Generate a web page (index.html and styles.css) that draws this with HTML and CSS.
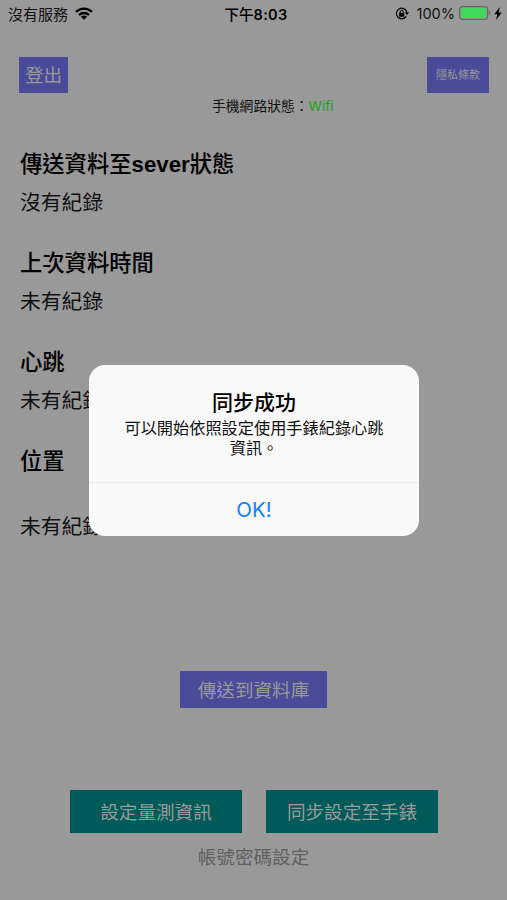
FILE: index.html
```html
<!DOCTYPE html>
<html lang="zh-Hant">
<head>
<meta charset="utf-8">
<title>同步設定</title>
<link rel="stylesheet" href="styles.css">
</head>
<body>
<div class="screen">
  <header class="status">
    <div class="carrier"><span>沒有服務</span>
      <svg class="wifi" viewBox="0 0 18 13"><g fill="none" stroke="#000" stroke-width="2.3"><path d="M1 4.8a11.5 11.5 0 0 1 16 0"/><path d="M4 8a7.2 7.2 0 0 1 10 0"/></g><path d="M9 12.8 5.9 9.8a4.4 4.4 0 0 1 6.2 0z"/></svg>
    </div>
    <div class="clock">下午<b>8:03</b></div>
    <div class="power">
      <svg class="lock" viewBox="0 0 14 13"><path d="M11.2 9.4A5.3 5.3 0 1 1 11.8 5" fill="none" stroke="#000" stroke-width="1.2"/><path d="M10 5.3h4l-2 3z"/><rect x="4.1" y="5.8" width="5.2" height="3.9" rx=".5"/><path d="M5.2 6V4.8a1.5 1.5 0 0 1 3 0V6" fill="none" stroke="#000"/></svg>
      <span class="percent">100%</span>
      <svg class="battery" viewBox="0 0 32 14"><rect x=".6" y=".6" width="28" height="12.8" rx="2.8" fill="none" stroke="#666" stroke-width="1.2"/><rect x="2" y="2" width="25.2" height="10" rx="1.5" fill="#43d75c"/><path d="M29.8 4.6q1.5.4 1.5 2.4t-1.5 2.4z" fill="#666"/></svg>
      <svg class="bolt" viewBox="0 0 8 13"><path d="M5.8 0 .3 7.2h3L2 13l5.7-7.6h-3z"/></svg>
    </div>
  </header>
  <nav class="top">
    <button class="btn purple logout">登出</button>
    <button class="btn purple privacy">隱私條款</button>
  </nav>
  <p class="network">手機網路狀態：<span>Wifi</span></p>
  <main class="records">
    <section><h2>傳送資料至<b>sever</b>狀態</h2><p>沒有紀錄</p></section>
    <section><h2>上次資料時間</h2><p>未有紀錄</p></section>
    <section><h2>心跳</h2><p>未有紀錄</p></section>
    <section class="place"><h2>位置</h2><p>未有紀錄</p></section>
  </main>
  <button class="btn purple upload">傳送到資料庫</button>
  <div class="actions">
    <button class="btn teal">設定量測資訊</button>
    <button class="btn teal">同步設定至手錶</button>
  </div>
  <a class="account">帳號密碼設定</a>
  <div class="alert" role="alertdialog">
    <div class="message"><h3>同步成功</h3><p>可以開始依照設定使用手錶紀錄心跳<br>資訊。</p></div>
    <button class="ok">OK!</button>
  </div>
</div>
</body>
</html>
```
FILE: styles.css
```css
* { box-sizing: border-box; margin: 0; padding: 0; }
body { font-family: "Liberation Sans", "Noto Sans CJK TC", sans-serif; color: #111; background: #999; }
button { border: 0; font-family: inherit; }
svg { display: block; flex: none; }
.screen { position: relative; width: 507px; height: 900px; overflow: hidden; display: flex; flex-direction: column; background: #999; }
.status { display: grid; grid-template-columns: 1fr auto 1fr; height: 27px; align-items: center; padding: 0 5px 0 8px; font-size: 15px; }
.carrier { display: flex; align-items: center; gap: 7px; padding-bottom: 1px; }
.wifi { width: 18px; height: 13px; }
.clock { font-family: Inter, "Noto Sans CJK TC", sans-serif; font-size: 14.5px; font-weight: 500; color: #000; padding: 0 0 1px 2px; }
.clock b { font-weight: 600; letter-spacing: 0.3px; }
.power { display: flex; align-items: center; justify-content: flex-end; padding-bottom: 1px; }
.lock { width: 14px; height: 13px; margin-right: 8px; }
.percent { font-family: Inter, sans-serif; font-size: 14.5px; margin-right: 4px; }
.battery { width: 32px; height: 14px; margin-right: 3px; }
.bolt { width: 8px; height: 13px; }
.top { display: flex; justify-content: space-between; margin: 30px 18px 0 19px; }
.btn { display: flex; align-items: center; justify-content: center; padding-top: 3px; font-size: 18.6px; line-height: 1; color: #999; }
.purple { background: #4b4b9a; }
.logout { width: 49px; height: 36px; }
.privacy { width: 62px; height: 36px; font-size: 11px; padding-top: 1px; }
.network { margin: 3px 0 0 212px; height: 21px; line-height: 20px; font-size: 13.8px; white-space: nowrap; }
.network span { color: #16a516; font-family: Inter, sans-serif; font-size: 13.5px; }
.records { margin: 26px 0 0 20px; height: 399px; }
.records section { height: 99px; padding-top: 3px; }
.records h2 { font-size: 22.3px; font-weight: 500; line-height: 38px; color: #000; }
.records h2 b { font-weight: 700; }
.records p { font-size: 20.8px; line-height: 38px; }
.records .place p { margin-top: 27px; }
.upload { width: 147px; height: 37px; margin: 129px 0 0 180px; }
.actions { display: flex; gap: 24px; margin: 82px 0 0 70px; }
.teal { width: 172px; height: 43px; background: #005a5a; }
.account { margin: 12px 0 0; text-align: center; font-size: 18.6px; line-height: 26px; color: #606060; }
.alert { position: absolute; left: 89px; top: 365px; width: 330px; height: 171px; border-radius: 16px; overflow: hidden; background: #f9f9f9; text-align: center; }
.message { height: 118px; padding-top: 22px; border-bottom: 1px solid #ebebeb; }
.alert h3 { font-size: 21px; font-weight: 500; line-height: 31px; color: #000; }
.alert p { font-size: 16.2px; line-height: 20px; }
.ok { width: 100%; height: 53px; background: none; color: #147efb; font-family: Inter, sans-serif; font-size: 20.5px; }
```
